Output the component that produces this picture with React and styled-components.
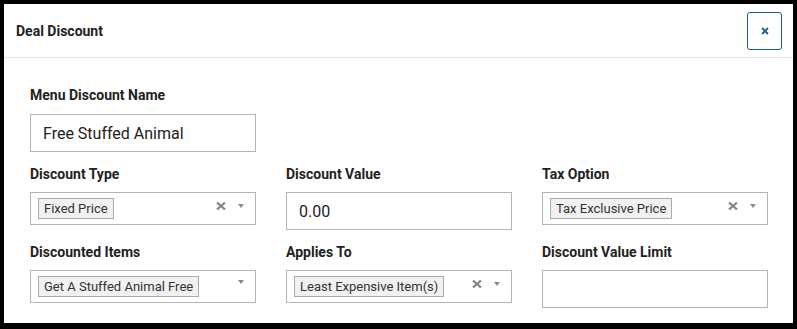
import React from 'react';
import styled, { createGlobalStyle } from 'styled-components';

const GlobalStyle = createGlobalStyle`
    html, body {
        margin: 0;
        padding: 0;
        background: #000000;
        font-family: Roboto, "Liberation Sans", Arial, sans-serif;
    }
`;

const Modal = styled.div`
    margin: 4px 4px 0 4px;
    height: 319px;
    background: #ffffff;
    box-sizing: border-box;
`;

const Header = styled.div`
    display: flex;
    align-items: center;
    justify-content: space-between;
    height: 54px;
    padding: 0 11px 0 12px;
    border-bottom: 1px solid #e6e6e6;
    box-sizing: border-box;
`;

const Title = styled.h4`
    margin: 0;
    font-size: 14px;
    font-weight: 700;
    color: #222222;
`;

const CloseButton = styled.button`
    display: flex;
    align-items: center;
    justify-content: center;
    width: 35px;
    height: 38px;
    padding: 0;
    background: #ffffff;
    border: 1px solid #1a5f8c;
    border-radius: 3px;
    color: #1a5f8c;
    cursor: pointer;
`;

const Body = styled.div`
    display: grid;
    grid-template-columns: repeat(3, 226px);
    column-gap: 30px;
    row-gap: 13px;
    padding: 28px 26px 0 26px;
`;

const Field = styled.div`
    display: flex;
    flex-direction: column;
`;

const Label = styled.label`
    font-size: 14px;
    font-weight: 700;
    line-height: 18px;
    color: #222222;
    margin-bottom: ${p => p.$first ? 10 : 9}px;
`;

const TextInput = styled.input`
    box-sizing: border-box;
    width: 100%;
    height: 38px;
    padding: 0 12px;
    border: 1px solid #b4b4b4;
    border-radius: 0;
    font-family: Roboto, "Liberation Sans", Arial, sans-serif;
    font-size: 16px;
    color: #222222;
    outline: none;
`;

const SelectBox = styled.div`
    box-sizing: border-box;
    display: flex;
    align-items: flex-start;
    height: 33px;
    padding: 5px 11px 0 7px;
    border: 1px solid #b4b4b4;
`;

const Tag = styled.span`
    display: inline-block;
    padding: 0 5px;
    line-height: 19px;
    font-size: 13px;
    color: #333333;
    background: #f1f1f1;
    border: 1px solid #aaaaaa;
`;

const Spacer = styled.div`
    flex: 1;
`;

const Controls = styled.div`
    display: flex;
    align-items: center;
    gap: 12px;
    margin-top: 4px;
`;

const ClearIcon = () => (
    <svg width="10" height="8" viewBox="0 0 10 8">
        <path d="M1 0.5 L9 7.5 M9 0.5 L1 7.5" stroke="#888888" strokeWidth="2.3" />
    </svg>
);

const Arrow = () => (
    <svg width="6" height="4" viewBox="0 0 6 4">
        <path d="M0 0 H6 L3 4 Z" fill="#8a8a8a" />
    </svg>
);

const Select = ({ value, clearable }) => (
    <SelectBox>
        <Tag>{value}</Tag>
        <Spacer />
        <Controls>
            {clearable && <ClearIcon />}
            <Arrow />
        </Controls>
    </SelectBox>
);

const App = () => (
    <>
        <GlobalStyle />
        <Modal>
            <Header>
                <Title>Deal Discount</Title>
                <CloseButton aria-label="close">
                    <svg width="8" height="8" viewBox="0 0 8 8">
                        <path d="M1 1 L7 7 M7 1 L1 7" stroke="#1a5f8c" strokeWidth="1.8" />
                    </svg>
                </CloseButton>
            </Header>
            <Body>
                <Field>
                    <Label $first>Menu Discount Name</Label>
                    <TextInput defaultValue="Free Stuffed Animal" />
                </Field>
                <div />
                <div />
                <Field>
                    <Label>Discount Type</Label>
                    <Select value="Fixed Price" clearable />
                </Field>
                <Field>
                    <Label>Discount Value</Label>
                    <TextInput defaultValue="0.00" />
                </Field>
                <Field>
                    <Label>Tax Option</Label>
                    <Select value="Tax Exclusive Price" clearable />
                </Field>
                <Field>
                    <Label>Discounted Items</Label>
                    <Select value="Get A Stuffed Animal Free" />
                </Field>
                <Field>
                    <Label>Applies To</Label>
                    <Select value="Least Expensive Item(s)" clearable />
                </Field>
                <Field>
                    <Label>Discount Value Limit</Label>
                    <TextInput />
                </Field>
            </Body>
        </Modal>
    </>
);

export default App;
